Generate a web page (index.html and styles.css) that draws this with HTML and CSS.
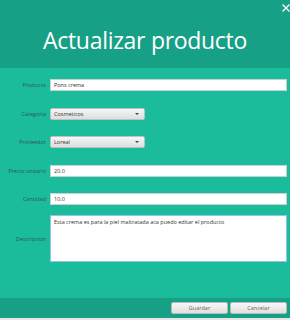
FILE: index.html
```html
<!DOCTYPE html>
<html>
<head>
    <title>Actualizar producto</title>
    <link rel="stylesheet" href="styles.css">
</head>
<body>
    <div class="window">
        <header class="top">
            <button class="close" aria-label="Cerrar">
                <svg width="8" height="8" viewBox="0 0 8 8"><path d="M0.5 0.5L7.5 7.5M7.5 0.5L0.5 7.5" stroke="#fff" stroke-width="1.3"/></svg>
            </button>
            <h1>Actualizar producto</h1>
        </header>
        <form class="form" id="product-form">
            <label for="producto">Producto</label>
            <input type="text" id="producto" value="Pons crema">

            <label for="categoria">Categoria</label>
            <div class="select"><span>Cosmeticos</span><i class="arrow"></i></div>

            <label for="proveedor">Proveedor</label>
            <div class="select"><span>Loreal</span><i class="arrow"></i></div>

            <label for="precio">Precio unitario</label>
            <input type="text" id="precio" value="20.0">

            <label for="cantidad">Cantidad</label>
            <input type="text" id="cantidad" value="10.0">

            <label for="descripcion" class="desc-label">Descripcion</label>
            <textarea id="descripcion" class="desc">Esta crema es para la piel maltratada aca puedo editar el producto</textarea>
        </form>
        <footer class="bottom">
            <button class="btn">Guardar</button>
            <button class="btn">Cancelar</button>
        </footer>
        <div class="strip"></div>
    </div>
</body>
</html>
```

FILE: styles.css
```css
body {
    margin: 0;
    font-family: "Open Sans", "Noto Sans", sans-serif;
}

.window {
    width: 290px;
    height: 320px;
    display: flex;
    flex-direction: column;
    background-color: #1abc9c;
}

.top {
    height: 68px;
    background-color: #16a085;
    display: flex;
    justify-content: center;
    align-items: center;
    position: relative;
}

.top h1 {
    margin: 12px 0 0 0;
    color: #fff;
    font-weight: 400;
    font-size: 23px;
    letter-spacing: -0.3px;
}

.close {
    position: absolute;
    top: 4px;
    right: 0px;
    background: none;
    border: none;
    padding: 0;
    width: 8px;
    height: 8px;
    display: flex;
}

.form {
    flex: 1;
    display: grid;
    grid-template-columns: 46px 237px;
    column-gap: 4px;
    row-gap: 16.5px;
    align-content: start;
    align-items: center;
    padding-top: 11px;
}

.form label {
    font-size: 5.5px;
    color: #37574f;
    text-align: right;
    white-space: nowrap;
}

.form input,
.desc {
    box-sizing: border-box;
    height: 12px;
    border: 1px solid #c8d2ce;
    background: #fff;
    font-family: inherit;
    font-size: 5.5px;
    color: #333;
    padding: 0 3px;
    margin: 0;
    outline: none;
}

.select {
    box-sizing: border-box;
    width: 95px;
    height: 12px;
    border: 1px solid #b9c4c0;
    border-radius: 2px;
    background: linear-gradient(#f6f6f6, #dedede);
    display: flex;
    align-items: center;
    justify-content: space-between;
    padding: 0 5px 0 3px;
    font-size: 5.5px;
    color: #333;
}

.arrow {
    width: 0;
    height: 0;
    border-left: 2px solid transparent;
    border-right: 2px solid transparent;
    border-top: 2px solid #444;
}

.desc-label {
    margin-top: -6.5px;
}

.desc {
    height: 47px;
    margin-top: -6.5px;
    padding: 3px;
    resize: none;
    border: 1px solid #8fc6e6;
    line-height: 1.2;
}

.bottom {
    height: 20px;
    background-color: #17a086;
    display: flex;
    justify-content: flex-end;
    align-items: center;
    gap: 2px;
    padding-right: 3px;
}

.btn {
    box-sizing: border-box;
    width: 57px;
    height: 12px;
    border: 1px solid #b5bebb;
    border-radius: 2px;
    background: linear-gradient(#f7f7f7, #e0e0e0);
    font-family: inherit;
    font-size: 5.5px;
    color: #666;
    padding: 0;
}

.strip {
    height: 2px;
    background-color: #e6e6e6;
}
```
